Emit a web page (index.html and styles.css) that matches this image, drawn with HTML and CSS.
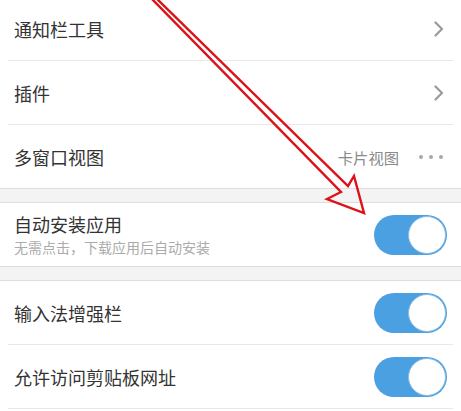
FILE: index.html
```html
<!DOCTYPE html>
<html lang="zh-CN">
<head>
<meta charset="utf-8">
<link rel="stylesheet" href="styles.css">
</head>
<body>
<div class="page">
  <div class="group first">
    <div class="row">
      <span class="title">通知栏工具</span>
      <svg class="chev" width="10" height="16" viewBox="0 0 10 16"><polyline points="1.5,1.5 8,8 1.5,14.5" fill="none" stroke="#9a9a9a" stroke-width="2.2" stroke-linecap="round" stroke-linejoin="round"/></svg>
    </div>
    <div class="row">
      <span class="title">插件</span>
      <svg class="chev" width="10" height="16" viewBox="0 0 10 16"><polyline points="1.5,1.5 8,8 1.5,14.5" fill="none" stroke="#9a9a9a" stroke-width="2.2" stroke-linecap="round" stroke-linejoin="round"/></svg>
    </div>
    <div class="row last">
      <span class="title">多窗口视图</span>
      <div class="right">
        <span class="value">卡片视图</span>
        <span class="dots"><i></i><i></i><i></i></span>
      </div>
    </div>
  </div>
  <div class="gap"></div>
  <div class="group">
    <div class="row last">
      <div class="texts">
        <span class="title">自动安装应用</span>
        <span class="sub">无需点击，下载应用后自动安装</span>
      </div>
      <span class="toggle"><span class="knob"></span></span>
    </div>
  </div>
  <div class="gap"></div>
  <div class="group open">
    <div class="row">
      <span class="title">输入法增强栏</span>
      <span class="toggle"><span class="knob"></span></span>
    </div>
    <div class="row">
      <span class="title">允许访问剪贴板网址</span>
      <span class="toggle"><span class="knob"></span></span>
    </div>
  </div>
</div>
<svg class="arrow" width="461" height="411" viewBox="0 0 461 411">
  <polygon points="150,-3 341,192 327,199 364,213 354,176 348,186 155,-3" fill="none" stroke="#dc1218" stroke-width="2.4" stroke-linejoin="miter"/>
</svg>
</body>
</html>
```
FILE: styles.css
```css
html, body {
  margin: 0;
  padding: 0;
  background: #ffffff;
  width: 461px;
  height: 411px;
  overflow: hidden;
}
body {
  font-family: "Noto Sans CJK SC", "Noto Sans", sans-serif;
  color: #333333;
  position: relative;
}
.page {
  margin-top: -3px;
}
.group {
  background: #ffffff;
  border-top: 1px solid #dedede;
  border-bottom: 1px solid #dedede;
}
.group.first {
  border-top: none;
}
.group.open {
  border-bottom: none;
}
.row {
  height: 63px;
  margin: 0 8px;
  padding: 0 6px 0 6px;
  border-bottom: 1px solid #e8e8e8;
  display: flex;
  align-items: center;
  justify-content: space-between;
}
.row.last {
  border-bottom: none;
}
.title {
  font-size: 18px;
  line-height: 22px;
  color: #333333;
}
.texts {
  display: flex;
  flex-direction: column;
  gap: 2px;
  padding-top: 1px;
}
.sub {
  font-size: 14px;
  line-height: 20px;
  color: #ababab;
}
.chev {
  margin-right: 3px;
  display: block;
}
.right {
  display: flex;
  align-items: center;
  gap: 20px;
  margin-right: 4px;
}
.value {
  font-size: 15.3px;
  color: #8a8a8a;
}
.dots {
  display: flex;
  gap: 6px;
}
.dots i {
  width: 4px;
  height: 4px;
  border-radius: 50%;
  background: #a8a8a8;
  display: block;
}
.toggle {
  width: 73px;
  height: 40px;
  border-radius: 20px;
  background: #4ba0e2;
  position: relative;
  display: block;
}
.knob {
  position: absolute;
  right: 1px;
  top: 1px;
  width: 36px;
  height: 36px;
  border-radius: 50%;
  background: #ffffff;
  border: 1px solid #8dbde0;
}
.gap {
  height: 13px;
  background: #f3f3f3;
}
.arrow {
  position: absolute;
  left: 0;
  top: 0;
  pointer-events: none;
}
```
